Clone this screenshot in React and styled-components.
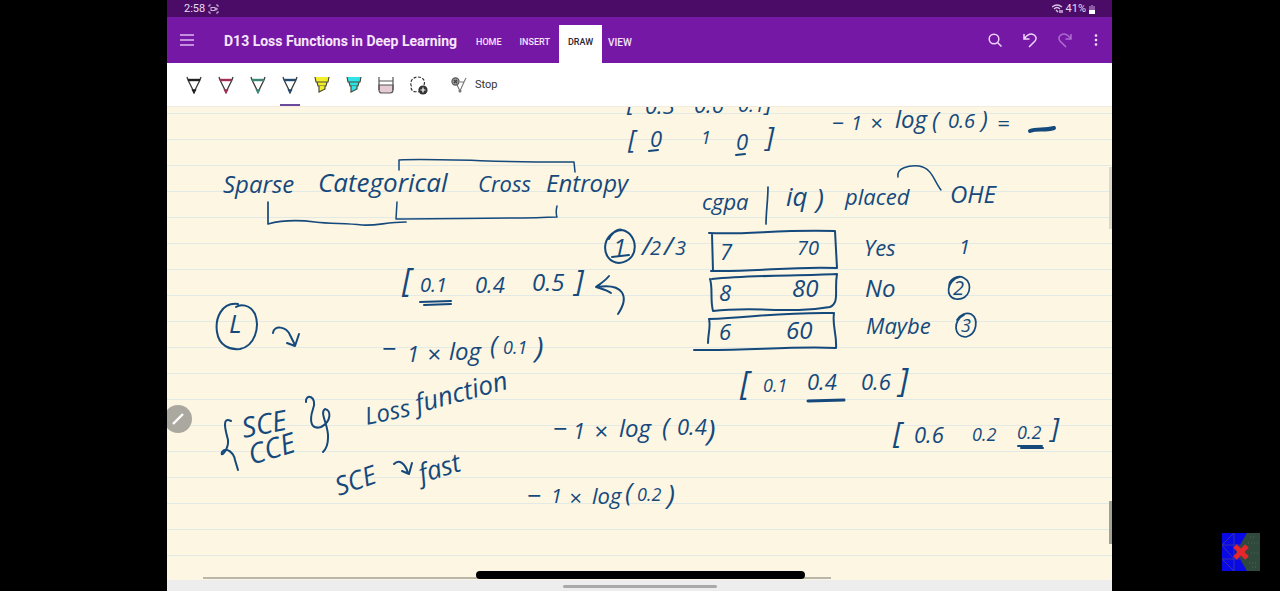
import React from "react";
import styled, { createGlobalStyle, css } from "styled-components";

const Global = createGlobalStyle`
  * { box-sizing: border-box; }
  body { margin: 0; background: #000; font-family: Roboto, "Liberation Sans", sans-serif; }
  button { font: inherit; border: 0; padding: 0; background: none; color: inherit; }
`;

const INK = "#15497c";

const Screen = styled.div`
  min-height: 100vh;
  display: flex;
  padding: 0 168px 0 167px;
  background: #000;
`;

const Tablet = styled.main`
  flex: 1;
  min-width: 0;
  display: flex;
  flex-direction: column;
  overflow: hidden;
  background: #fff;
`;

const StatusBar = styled.div`
  height: 17px;
  display: flex;
  align-items: center;
  justify-content: space-between;
  padding: 1px 17px 0;
  background: #4b0c68;
  color: #e9dcf0;
  font-size: 11px;
  line-height: 16px;
`;

const StatusGroup = styled.div`
  display: flex;
  align-items: center;
  gap: 3px;
`;

const Header = styled.header`
  height: 46px;
  display: flex;
  align-items: center;
  justify-content: space-between;
  padding: 0 12px;
  background: #7518a6;
  color: #f6e6fd;
`;

const HeaderSide = styled.div`
  display: flex;
  align-items: center;
  height: 100%;
`;

const IconButton = styled.button`
  width: ${(p) => p.$w || 16}px;
  height: 24px;
  display: flex;
  align-items: center;
  justify-content: center;
  opacity: ${(p) => (p.$dim ? 0.45 : 1)};
`;

const Title = styled.h1`
  margin: 0 0 0 29px;
  padding-top: 2px;
  min-width: 243px;
  font-size: 14px;
  line-height: 24px;
  font-weight: 700;
  white-space: nowrap;
`;

const Tabs = styled.nav`
  display: flex;
  align-self: stretch;
  align-items: flex-end;
`;

const Tab = styled.button`
  height: 38px;
  padding: 0 9px 4px;
  font-size: ${(p) => p.$size || 9}px;
  font-weight: 500;
  ${(p) =>
    p.$active &&
    css`
      background: #fff;
      color: #2b2430;
    `}
  &:last-child {
    padding-left: 6px;
  }
`;

const Actions = styled.div`
  display: flex;
  align-items: center;
  gap: 19px;
`;

const Toolbar = styled.div`
  height: 43px;
  display: flex;
  align-items: stretch;
  padding-left: 11px;
  background: #fff;
`;

const Tool = styled.button`
  width: 32px;
  display: flex;
  justify-content: center;
  align-items: center;
  padding-top: 1px;
  background: ${(p) =>
    p.$active ? "linear-gradient(#6a4a9c, #6a4a9c) center bottom / 20px 2px no-repeat" : "none"};
`;

const StopButton = styled.button`
  display: flex;
  align-items: center;
  gap: 8px;
  margin-left: 17px;
  font-size: 11px;
  color: #333;
`;

const Page = styled.section`
  position: relative;
  flex: 1;
  min-height: 474px;
  overflow: hidden;
  border-top: 1px solid #f1ecdf;
  background: repeating-linear-gradient(
      #fcf6e3 0 6px,
      #e3e9e5 6px 7px,
      #fcf6e3 7px 26px
    );
`;

const Strokes = styled.svg`
  position: absolute;
  left: 0;
  top: 0;
  fill: none;
  stroke: ${INK};
  stroke-width: 2;
  stroke-linecap: round;
  stroke-linejoin: round;
`;

/* Handwritten words sit freely on the page: x is their left edge, y their baseline. */
const Ink = styled.span`
  position: absolute;
  left: ${(p) => p.$x - 167}px;
  top: ${(p) => p.$y - 105 - p.$size}px;
  font-family: "Open Sans", "Noto Sans", sans-serif;
  font-style: italic;
  font-size: ${(p) => p.$size}px;
  line-height: 1.2;
  color: ${INK};
  white-space: pre;
  transform-origin: 0 ${(p) => p.$size}px;
  transform: rotate(${(p) => p.$turn || 0}deg);
`;

const PenToggle = styled.button`
  position: absolute;
  left: -3px;
  top: 298px;
  width: 28px;
  height: 28px;
  border-radius: 50%;
  background: #aaa89f;
  display: flex;
  align-items: center;
  justify-content: center;
`;

const Thumb = styled.div`
  position: absolute;
  right: 0;
  top: ${(p) => p.$top}px;
  width: 3px;
  height: ${(p) => p.$h}px;
  background: ${(p) => p.$color};
`;

const BottomBar = styled.footer`
  position: relative;
  height: 11px;
  background: #ededed;
  display: flex;
  justify-content: center;
  align-items: center;
  padding: 1px 0 0 0;
`;

const HomeHandle = styled.div`
  width: 154px;
  height: 3px;
  border-radius: 2px;
  background: #a9a9a9;
`;

const SideScroll = styled.div`
  position: absolute;
  left: 36px;
  right: 281px;
  top: -3px;
  height: 2px;
  background: #b9b6aa;
`;

const Pill = styled.div`
  position: absolute;
  left: 309px;
  right: 307px;
  top: -9px;
  height: 8px;
  border-radius: 4px;
  background: #000;
`;

const Watermark = styled.svg`
  position: fixed;
  right: 20px;
  bottom: 20px;
`;

const words = [
  ["[", 627, 110, 24], ["0.3", 645, 112, 22], ["0.6", 694, 111, 22], ["0.1", 738, 111, 20], ["]", 765, 110, 24],
  ["[", 628, 147, 26], ["0", 650, 145, 22], ["1", 701, 143, 18], ["0", 736, 148, 22], ["]", 766, 146, 28],
  ["−", 832, 129, 22], ["1", 851, 129, 20], ["×", 870, 129, 22], ["log", 895, 127, 24], ["(", 932, 128, 24],
  ["0.6", 948, 127, 20], [")", 981, 127, 24], ["=", 997, 129, 22],
  ["Sparse", 223, 192, 24], ["Categorical", 318, 191, 26], ["Cross", 478, 190, 22], ["Entropy", 546, 191, 24],
  ["cgpa", 702, 208, 22], ["iq", 786, 205, 26], [")", 816, 208, 28], ["placed", 845, 203, 22], ["OHE", 950, 202, 24],
  ["1", 613, 255, 24], ["/", 642, 254, 26], ["2", 650, 254, 20], ["/", 664, 254, 26], ["3", 675, 254, 20],
  ["7", 720, 258, 22], ["70", 797, 254, 20], ["Yes", 864, 254, 22], ["1", 959, 253, 20],
  ["8", 719, 299, 22], ["80", 792, 296, 24], ["No", 865, 296, 24], ["2", 953, 294, 20],
  ["6", 719, 338, 22], ["60", 786, 338, 24], ["Maybe", 866, 332, 22], ["3", 961, 331, 18],
  ["[", 740, 394, 32], ["0.1", 763, 391, 18], ["0.4", 807, 388, 22], ["0.6", 861, 388, 22], ["]", 899, 391, 32],
  ["[", 893, 442, 30], ["0.6", 914, 441, 22], ["0.2", 972, 440, 18], ["0.2", 1017, 438, 18], ["]", 1051, 437, 28],
  ["[", 402, 291, 32], ["0.1", 420, 291, 20], ["0.4", 475, 291, 22], ["0.5", 532, 290, 24], ["]", 575, 290, 30],
  ["L", 229, 332, 26],
  ["−", 382, 357, 26], ["1", 407, 360, 22], ["×", 427, 362, 24], ["log", 449, 359, 24], ["(", 490, 353, 26],
  ["0.1", 503, 353, 18], [")", 535, 357, 30],
  ["SCE", 244, 437, 28, -11], ["CCE", 252, 464, 28, -17],
  ["Loss", 367, 424, 24, -12], ["function", 418, 412, 26, -15],
  ["SCE", 339, 495, 26, -19], ["fast", 422, 482, 26, -17],
  ["−", 553, 437, 26], ["1", 573, 437, 22], ["×", 594, 439, 24], ["log", 619, 436, 24], ["(", 662, 435, 26],
  ["0.4", 677, 433, 22], [")", 707, 440, 30],
  ["−", 527, 504, 26], ["1", 551, 502, 20], ["×", 569, 504, 22], ["log", 592, 502, 22], ["(", 625, 500, 26],
  ["0.2", 637, 500, 18], [")", 667, 504, 28],
];

const lines = [
  ["M649 151 L658 150", 2], ["M736 155 L745 154", 2], ["M1030 131 C1037 128 1044 131 1054 128", 4],
  ["M399 170 V160 C440 158 510 163 574 162 L575 172", 1.5],
  ["M268 202 L268 224 C283 220 299 220 315 222 S345 223 362 225 C378 226 385 222 406 222", 1.7],
  ["M397 202 L396 219 C445 218 510 219 557 217 C556 214 556 210 557 206", 1.5],
  ["M768 187 C768 200 766 212 766 224", 1.7],
  ["M898 177 C896 168 909 165 919 166 C932 168 934 181 941 190", 1.5],
  ["M622 230 C600 232 600 262 619 263 C641 261 638 233 622 230 C617 228 611 234 609 239", 2],
  ["M612 257 L629 255", 2],
  ["M712 234 L713 271 M709 233 C746 235 782 229 835 231 L837 268 C790 266 760 272 711 271", 2],
  ["M710 279 C713 288 710 300 713 311 C755 306 790 314 830 307 C840 302 834 291 837 274 C795 276 751 275 712 279", 2],
  ["M709 319 C711 326 708 333 708 343 M709 319 C750 318 775 312 834 313 C832 326 837 334 836 348 C790 346 747 351 694 350", 2],
  ["M960 277 C946 280 945 298 956 299 C970 301 974 283 964 278 C957 274 949 280 949 286", 1.7],
  ["M964 315 C953 320 953 337 966 337 C977 334 979 319 971 314 C966 312 960 315 957 320", 1.7],
  ["M808 401 L844 400", 3],
  ["M1018 446 L1042 446 M1021 448 L1043 448", 2],
  ["M420 302 L451 301 M424 305 L451 304", 2],
  ["M618 314 C630 296 623 283 597 287 M609 276 C605 281 600 284 596 287 C602 289 607 290 611 293", 2],
  ["M238 304 C221 302 215 319 217 332 C219 346 230 350 240 349 C255 346 260 327 255 314 C250 304 240 304 236 307", 2],
  ["M273 333 C274 325 286 326 290 335 L295 345 M287 343 L295 346 L299 334", 2],
  ["M231 421 C221 416 226 432 228 440 C229 449 220 459 222 452 C226 446 234 453 235 460 L238 470", 2],
  ["M306 402 C305 393 318 396 313 409 C309 421 311 430 321 427 C332 421 331 410 325 409 C319 413 329 425 328 438 C328 446 325 450 323 452", 2],
  ["M394 464 C399 459 405 463 408 473 M402 471 L409 474 L412 463", 2],
];

function Pen({ color }) {
  return (
    <svg width="16" height="18" viewBox="0 0 16 18" fill="none" stroke="#3b3b3b" strokeWidth="1.3">
      <path d="M1 1L2 4L8 16L14 4L15 1" />
      <path d="M2 4H14" stroke={color} strokeWidth="2.4" />
      <path d="M6.5 14L8 17L9.5 14Z" fill={color} stroke={color} />
    </svg>
  );
}

function Marker({ color }) {
  return (
    <svg width="16" height="18" viewBox="0 0 16 18" fill="none" stroke="#4a4a3c" strokeWidth="1.2">
      <path d="M1 1H15V5L12 7V10H4V7L1 5Z" fill={color} stroke="none" />
      <path d="M1 1L2 6H14L15 1M3 6L4 10H12L13 6" />
      <path d="M5 10V16L11 13V10" fill={color} />
    </svg>
  );
}

function Eraser() {
  return (
    <svg width="16" height="18" viewBox="0 0 16 18" fill="none" stroke="#555" strokeWidth="1.2">
      <path d="M1 9H15V14Q15 17 12 17H4Q1 17 1 14Z" fill="#e6cbd5" />
      <path d="M1 1V14M15 1V14M1 5H15" />
    </svg>
  );
}

function Lasso() {
  return (
    <svg width="19" height="19" viewBox="0 0 19 19" fill="none">
      <path d="M15 9C17 4 13 1 9 1C4 1 1 5 2 9C3 11 1 12 3 14C5 17 8 15 10 16" stroke="#333" strokeWidth="1.2" strokeDasharray="3 1.5" />
      <circle cx="14" cy="14" r="4.6" fill="#333" />
      <path d="M11.5 14H16.5M14 11.5V16.5" stroke="#fff" strokeWidth="1.2" />
    </svg>
  );
}

const tools = [
  ["Black pen", <Pen color="#222" />],
  ["Red pen", <Pen color="#a03050" />],
  ["Green pen", <Pen color="#3f8577" />],
  ["Blue pen", <Pen color="#26496e" />],
  ["Yellow highlighter", <Marker color="#f2ee2b" />],
  ["Cyan highlighter", <Marker color="#2fe3e6" />],
  ["Eraser", <Eraser />],
  ["Lasso", <Lasso />],
];

export default function App() {
  return (
    <Screen>
      <Global />
      <Tablet>
        <StatusBar>
          <StatusGroup>
            <span>2:58</span>
            <svg width="11" height="10" viewBox="0 0 11 10" fill="none" stroke="#cdb3da">
              <path d="M1 3V1H3M8 1H10V3M10 7V9H8M3 9H1V7" />
              <rect x="3" y="3.5" width="4" height="3" />
              <path d="M7 5L9 4V6Z" />
            </svg>
          </StatusGroup>
          <StatusGroup>
            <svg width="11" height="10" viewBox="0 0 11 10" fill="none" stroke="#dcc6e6">
              <path d="M0 3Q5 -1 10 3M2 5Q5 2 8 5" strokeWidth="1.3" />
              <path d="M4 6L6 8M8 6V9M10 6V9" strokeWidth="1.4" />
            </svg>
            <span>41%</span>
            <svg width="6" height="9" viewBox="0 0 6 9">
              <path d="M2 0H4V1H6V9H0V1H2Z" fill="#8a5aa2" />
              <path d="M0 5H6V9H0Z" fill="#fff" />
            </svg>
          </StatusGroup>
        </StatusBar>
        <Header>
          <HeaderSide>
            <IconButton aria-label="Menu">
              <svg width="14" height="12" viewBox="0 0 14 12" stroke="#dfb6f2" strokeWidth="1.4">
                <path d="M0 1H14M0 6H14M0 11H14" />
              </svg>
            </IconButton>
            <Title>D13 Loss Functions in Deep Learning</Title>
            <Tabs>
              <Tab>HOME</Tab>
              <Tab>INSERT</Tab>
              <Tab $active>DRAW</Tab>
              <Tab $size={10}>VIEW</Tab>
            </Tabs>
          </HeaderSide>
          <Actions>
            <IconButton aria-label="Search">
              <svg width="14" height="14" viewBox="0 0 14 14" fill="none" stroke="#f0d5fb" strokeWidth="1.5">
                <circle cx="6" cy="6" r="4.8" />
                <path d="M9.5 9.5L13.5 13.5" />
              </svg>
            </IconButton>
            <IconButton aria-label="Undo">
              <svg width="14" height="15" viewBox="0 0 14 15" fill="none" stroke="#f0d5fb" strokeWidth="1.5">
                <path d="M1 1V6H6.5M1.5 5.5C4 2 7 .8 9.5 1.2C13 2 14 5.5 12 8L6 14" />
              </svg>
            </IconButton>
            <IconButton aria-label="Redo" $dim>
              <svg width="14" height="15" viewBox="0 0 14 15" fill="none" stroke="#f0d5fb" strokeWidth="1.5">
                <path d="M13 1V6H7.5M12.5 5.5C10 2 7 .8 4.5 1.2C1 2 0 5.5 2 8L8 14" />
              </svg>
            </IconButton>
            <IconButton aria-label="More" $w={8}>
              <svg width="4" height="12" viewBox="0 0 4 12" fill="#f6e6fd">
                <circle cx="2" cy="1.5" r="1.3" />
                <circle cx="2" cy="6" r="1.3" />
                <circle cx="2" cy="10.5" r="1.3" />
              </svg>
            </IconButton>
          </Actions>
        </Header>
        <Toolbar>
          {tools.map(([name, icon]) => (
            <Tool key={name} aria-label={name} $active={name === "Blue pen"}>
              {icon}
            </Tool>
          ))}
          <StopButton>
            <svg width="16" height="16" viewBox="0 0 16 16" fill="none" stroke="#777" strokeWidth="1.1">
              <path d="M15 1L13 5L9 14L6 8M9 5H13" />
              <circle cx="9" cy="14" r="1" fill="#555" />
              <circle cx="4.5" cy="4.5" r="3.6" fill="#999" stroke="#555" />
              <path d="M3 3L6 6M6 3L3 6" stroke="#444" />
            </svg>
            Stop
          </StopButton>
        </Toolbar>
        <Page>
          <Strokes width="945" height="473" viewBox="167 107 945 473" aria-hidden="true">
            {lines.map(([d, w]) => (
              <path key={d} d={d} strokeWidth={w} />
            ))}
          </Strokes>
          {words.map(([text, x, y, size, turn]) => (
            <Ink key={`${x}-${y}`} $x={x} $y={y} $size={size} $turn={turn}>
              {text}
            </Ink>
          ))}
          <PenToggle aria-label="Pen mode">
            <svg width="12" height="12" viewBox="0 0 12 12" stroke="#fff" strokeWidth="2.4">
              <path d="M1 11L11 1" />
            </svg>
          </PenToggle>
          <Thumb $top={60} $h={62} $color="#dcd8cb" />
          <Thumb $top={394} $h={43} $color="#a3a097" />
        </Page>
        <BottomBar>
          <SideScroll />
          <Pill />
          <HomeHandle />
        </BottomBar>
      </Tablet>
      <Watermark width="38" height="38" viewBox="0 0 38 38" aria-hidden="true">
        <path d="M0 0H38V38H0Z" fill="#2f4a3c" />
        <path d="M0 0H25L14 19L25 38H0Z" fill="#0909e6" />
        <path d="M0 12H20M0 26H20M12 0V38M0 12L12 0M0 26L12 38M0 12L12 26" stroke="#3434a8" fill="none" />
        <path d="M28 4H34M26 10H36M27 30H35M30 34H36M29 20H37" stroke="#4e6656" strokeDasharray="1 2" />
        <path d="M13 13L25 25M25 13L13 25" stroke="#e5262c" strokeWidth="5" />
      </Watermark>
    </Screen>
  );
}
